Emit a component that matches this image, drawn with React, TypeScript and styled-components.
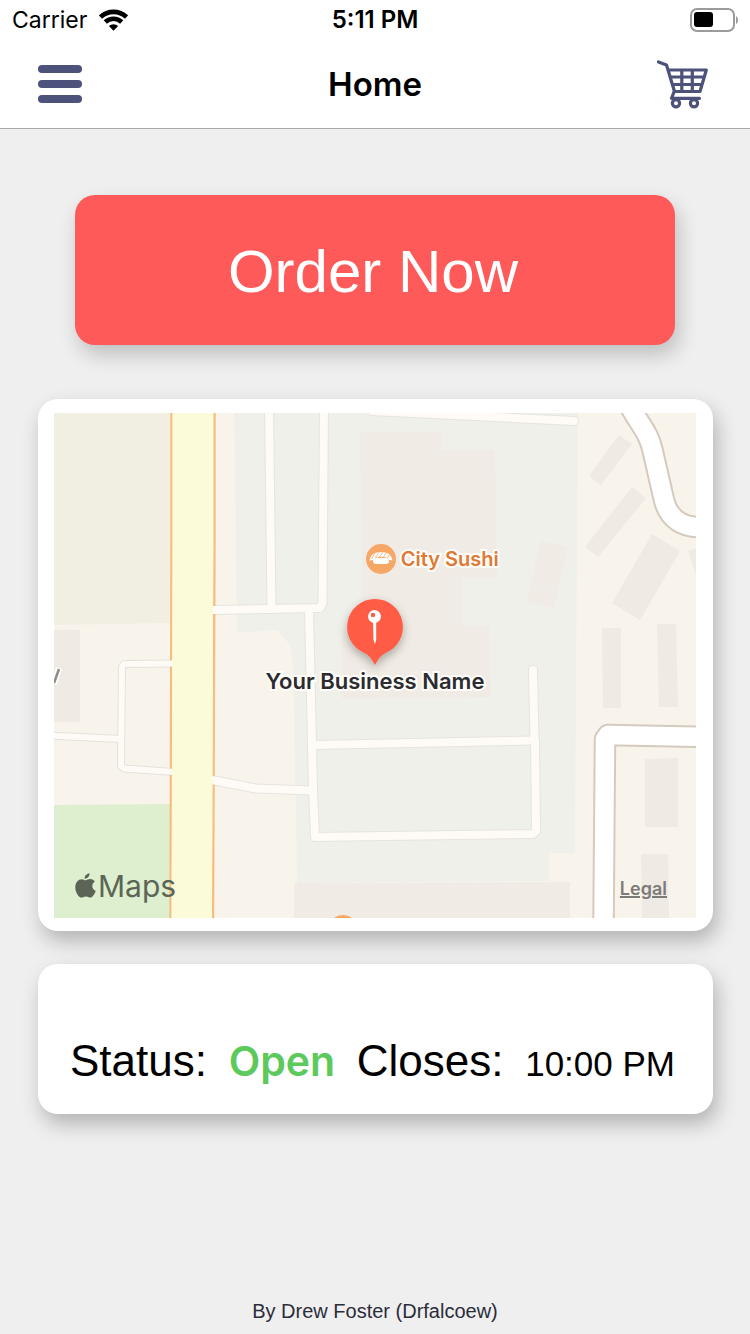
import React from 'react';
import styled, { createGlobalStyle } from 'styled-components';

const sans = "'Liberation Sans', Helvetica, Arial, sans-serif";
const system = "Inter, 'Liberation Sans', sans-serif";
const indigo = '#4d527c';

const GlobalStyle = createGlobalStyle`
  * { box-sizing: border-box; }
  body { margin: 0; background: #efefef; font-family: ${sans}; color: #000; }
`;

const Page = styled.div`
  display: flex;
  flex-direction: column;
  min-height: 100vh;
`;

const Header = styled.header`
  background: #fff;
  border-bottom: 1px solid #a9a9ab;
`;

const StatusBar = styled.div`
  display: grid;
  grid-template-columns: 1fr auto 1fr;
  align-items: center;
  height: 40px;
  padding: 0 12px;
  font: 400 23px/40px ${system};
`;

const Carrier = styled.div`
  display: flex;
  align-items: center;
  gap: 12px;
`;

const Clock = styled.time`
  font-size: 24px;
  font-weight: 600;
`;

const Battery = styled.div`
  display: flex;
  justify-content: flex-end;
`;

const NavBar = styled.nav`
  display: grid;
  grid-template-columns: 1fr auto 1fr;
  align-items: center;
  height: 88px;
  padding: 0 38px;
`;

const Title = styled.h1`
  margin: 0;
  font: 600 33px/44px ${system};
`;

const IconButton = styled.button<{ $end?: boolean }>`
  display: flex;
  justify-self: ${(p) => (p.$end ? 'end' : 'start')};
  padding: 0;
  border: 0;
  background: none;
  cursor: pointer;
`;

const Main = styled.main`
  flex: 1;
  display: flex;
  flex-direction: column;
  padding: 66px 37px 0 38px;
`;

const OrderButton = styled.button`
  height: 150px;
  margin: 0 38px 54px 37px;
  padding: 4px 4px 0 0;
  border: 0;
  border-radius: 20px;
  background: #ff5a5a;
  color: #fff;
  font: 400 60px/72px ${sans};
  box-shadow: 4px 10px 20px rgba(0, 0, 0, 0.2);
  cursor: pointer;
`;

const Card = styled.section`
  background: #fff;
  border-radius: 20px;
  box-shadow: 4px 10px 20px rgba(0, 0, 0, 0.25);
`;

const MapCard = styled(Card)`
  padding: 14px 17px 13px 16px;
  margin-bottom: 33px;
`;

const MapView = styled.div`
  position: relative;
  overflow: hidden;
  font-family: ${system};

  > svg { display: block; width: 100%; height: auto; }
`;

const MapLabel = styled.span<{ $x: number; $y: number; $color: string; $size: number; $centered?: boolean }>`
  position: absolute;
  left: ${(p) => p.$x}%;
  top: ${(p) => p.$y}%;
  transform: translate(${(p) => (p.$centered ? '-50%' : '0')}, -50%);
  color: ${(p) => p.$color};
  font-size: ${(p) => p.$size}px;
  font-weight: 600;
  line-height: 24px;
  white-space: nowrap;
  -webkit-text-stroke: 4px #fffdfa;
  paint-order: stroke fill;
`;

const MapBrand = styled.div`
  position: absolute;
  left: 21px;
  bottom: 12px;
  display: flex;
  align-items: center;
  gap: 2px;
  color: #5c6555;
  font-size: 30px;
  line-height: 40px;
`;

const LegalLink = styled.a`
  position: absolute;
  right: 29px;
  bottom: 17px;
  color: #7d7b77;
  font-size: 18px;
  font-weight: 600;
  line-height: 24px;
  text-decoration: underline;
  text-decoration-thickness: 2px;
`;

const HoursCard = styled(Card)`
  display: flex;
  align-items: baseline;
  justify-content: space-between;
  height: 150px;
  padding: 72px 38px 0 32px;
  white-space: nowrap;
`;

const Label = styled.span`
  font-size: 44px;
  line-height: 50px;
`;

const OpenState = styled.strong`
  color: #5bc95b;
  font: 600 41px/50px ${system};
`;

const ClosingTime = styled.time`
  font-size: 35px;
  line-height: 50px;
`;

const Footer = styled.footer`
  padding: 12px;
  text-align: center;
  font-size: 20px;
  line-height: 22px;
  color: #2b2d3a;
`;

const WifiIcon = () => (
  <svg width="29" height="22" viewBox="0 0 29 22" aria-hidden="true">
    <g fill="none" stroke="#000" strokeWidth="4.6">
      <path d="M1.500 8.100a18.700 18.700 0 0 1 26 0" />
      <path d="M6.300 13a11.800 11.800 0 0 1 16.400 0" />
    </g>
    <path d="M14.500 21.700l-4.600-4.600a6.500 6.500 0 0 1 9.200 0z" />
  </svg>
);

const BatteryIcon = () => (
  <svg width="49" height="24" viewBox="0 0 49 24" role="img" aria-label="Battery at half charge">
    <rect x="2" y="1" width="43" height="22" rx="6" fill="none" stroke="#9b9b9b" strokeWidth="2" />
    <rect x="5" y="4" width="19" height="15" rx="3" />
    <path d="M47 8q2 1 2 4t-2 4z" fill="#9b9b9b" />
  </svg>
);

const MenuIcon = () => (
  <svg width="44" height="40" viewBox="2 0 44 40" aria-hidden="true">
    <g fill={indigo}>
      <rect x="2" y="1" width="44" height="8" rx="4" />
      <rect x="2" y="16" width="44" height="8" rx="4" />
      <rect x="2" y="31" width="44" height="8" rx="4" />
    </g>
  </svg>
);

const CartIcon = () => (
  <svg width="56" height="50" viewBox="656 59 56 50" aria-hidden="true">
    <g fill="none" stroke={indigo} strokeWidth="3.2" strokeLinecap="round" strokeLinejoin="round">
      <path d="M658.500 62L666.500 65L674.500 91.500H700L706.300 70H668.500" />
      <path d="M671 77H704M673 84.500H702M681.800 70V91M692.300 70V91" strokeLinecap="butt" />
      <path d="M674 92L671.500 98.300H699.500" />
      <circle cx="676" cy="103.200" r="3.600" />
      <circle cx="694" cy="103.200" r="3.600" />
    </g>
  </svg>
);

const AppleLogo = () => (
  <svg width="21" height="26" viewBox="0 0 21 26" aria-hidden="true">
    <path
      fill="currentColor"
      d="M14.600.3c.2 3-2.300 5.500-5 5.400C9.300 3 11.900.6 14.600.3zM10.600 7.300c1.200 0 2.500-1.200 4.700-1.200 1.900.1 3.500.9 4.600 2.500-3.900 2.500-3.300 7.700.8 9.300-.9 2.600-3.100 6.600-5.500 6.700-1.700 0-2.300-1.100-4.300-1.100s-2.700 1.100-4.300 1.100C3.700 24.700.3 19.300.3 14.200c0-5 3.200-8 6.300-8 1.900 0 3.100 1.100 4 1.100z"
    />
  </svg>
);

const paths = [
  'M269 405L271.500 609',
  'M324 405L322.500 603L320 608L214 610',
  'M309 609L313 790L315 837L533 834L536 831L535 741',
  'M533 670L534.500 741',
  'M313 745L535 740.500',
  'M212 780L256 788.500L312 790.500',
  'M372 411L574 421',
];
const lanes = ['M174 663.500L124 664L122 667L121 766L124 768.500L174 772', 'M50 735.500L121 739'];
const streets = [
  'M629 405C640 425 649 433 652.500 450L664 500C669 520 684 528 702 527',
  'M603.500 925L605 739L608 735L702 737',
];

const MapArtwork = () => (
  <svg viewBox="54 413 642 505" role="img" aria-label="Street map around the business">
    <defs>
      <filter id="pin-shadow" x="-40%" y="-30%" width="180%" height="180%">
        <feDropShadow dx="0" dy="4" stdDeviation="5" floodColor="#000" floodOpacity="0.3" />
      </filter>
    </defs>
    <rect x="54" y="413" width="642" height="505" fill="#f8f4ec" />
    <path fill="#f1efe2" d="M54 413H172V623L54 625z" />
    <path fill="#deefd0" d="M54 805L171 804V918H54z" />
    <path fill="#efeae4" d="M54 630H80V722H54z" />
    <path fill="#f0f0eb" d="M234 413H578L575 853H549V881L297 883L293 665L290 645L277 630L237 633z" />
    <g fill="#f0ebe4">
      <path d="M360 432H442V450H495L497 578H462V626H489L491 697L342 699V631H363z" />
      <path d="M540 541L568 547L554 608L527 602z" />
      <path d="M294 883L570 882V918H294z" />
    </g>
    <g fill="#efeae4">
      <path d="M619 435L632 444L601 485L589 476z" />
      <path d="M632 487L646 498L598 557L585 547z" />
      <path d="M652 534L680 551L640 620L612 603z" />
      <path d="M688 551L696 548V575z" />
      <path d="M602 628H621V708H603z" />
      <path d="M657 624H676L678 707H659z" />
      <path d="M645 759L678 758V827H645z" />
      <path d="M641 854H668L669 918H642z" />
    </g>
    <g fill="none" strokeLinecap="round" strokeLinejoin="round">
      {lanes.map((d) => <path key={d} d={d} stroke="#e4e2dc" strokeWidth="8" />)}
      {paths.map((d) => <path key={d} d={d} stroke="#e5e4df" strokeWidth="10" />)}
      {streets.map((d) => <path key={d} d={d} stroke="#d5cabd" strokeWidth="22.500" />)}
      {streets.map((d) => <path key={d} d={d} stroke="#fff" strokeWidth="18.500" />)}
    </g>
    <path fill="#fbfad9" stroke="#f7bd80" strokeWidth="2.400" d="M171.500 405V540L170.500 925H213L214.500 545V405z" />
    <g fill="none" stroke="#fefbf6" strokeLinecap="round" strokeLinejoin="round">
      {lanes.map((d) => <path key={d} d={d} strokeWidth="6" />)}
      {paths.map((d) => <path key={d} d={d} strokeWidth="8" />)}
    </g>
    <path fill="#fbfad9" d="M172.500 413V540L171.500 918H212L213.300 545V413z" />
    <path d="M54 684L59 668" fill="none" stroke="#fff" strokeWidth="6" />
    <path d="M54 683L59 669" fill="none" stroke="#8f8d88" strokeWidth="2.500" />
    <circle cx="343" cy="930" r="15" fill="#f6a665" />
    <circle cx="381" cy="559" r="15" fill="#f6a665" />
    <path fill="#fff" d="M369.500 560.500C370.500 554 375 552 381 552S391.500 554 392.500 560.500L389.500 560C387.500 557.500 385 557 381 557S374.500 558 373 560z" />
    <path d="M371.500 559L375 553M375 558.500L379 552M379 557.500L383 552M383 557.500L386.500 553M387 558.500L389.500 555" stroke="#f6a665" strokeWidth="0.800" />
    <rect x="373" y="558" width="16" height="6" rx="3" fill="#fff" />
    <path
      fill="#ff5b45"
      d="M375 599A28 28 0 0 1 386 652.700C380 655.500 378 660 375 665C372 660 370 655.500 364 652.700A28 28 0 0 1 375 599z"
      filter="url(#pin-shadow)"
    />
    <path fill="#fff" d="M373 620H376.200V640L375 644L373.500 640z" />
    <circle cx="374.500" cy="616.500" r="6.500" fill="#fff" />
    <rect x="371" y="613" width="4" height="4" rx="1" fill="#ff5b45" />
  </svg>
);

export default function App() {
  return (
    <Page>
      <GlobalStyle />
      <Header>
        <StatusBar>
          <Carrier>Carrier<WifiIcon /></Carrier>
          <Clock>5:11 PM</Clock>
          <Battery><BatteryIcon /></Battery>
        </StatusBar>
        <NavBar>
          <IconButton type="button" aria-label="Menu"><MenuIcon /></IconButton>
          <Title>Home</Title>
          <IconButton type="button" aria-label="Cart" $end><CartIcon /></IconButton>
        </NavBar>
      </Header>
      <Main>
        <OrderButton type="button">Order Now</OrderButton>
        <MapCard>
          <MapView>
            <MapArtwork />
            <MapLabel $x={54} $y={29} $color="#dc7a36" $size={20}>City Sushi</MapLabel>
            <MapLabel $x={50} $y={53} $color="#2b2b30" $size={22} $centered>Your Business Name</MapLabel>
            <MapBrand><AppleLogo />Maps</MapBrand>
            <LegalLink href="#legal">Legal</LegalLink>
          </MapView>
        </MapCard>
        <HoursCard>
          <Label>Status:</Label>
          <OpenState>Open</OpenState>
          <Label>Closes:</Label>
          <ClosingTime>10:00 PM</ClosingTime>
        </HoursCard>
      </Main>
      <Footer>By Drew Foster (Drfalcoew)</Footer>
    </Page>
  );
}
